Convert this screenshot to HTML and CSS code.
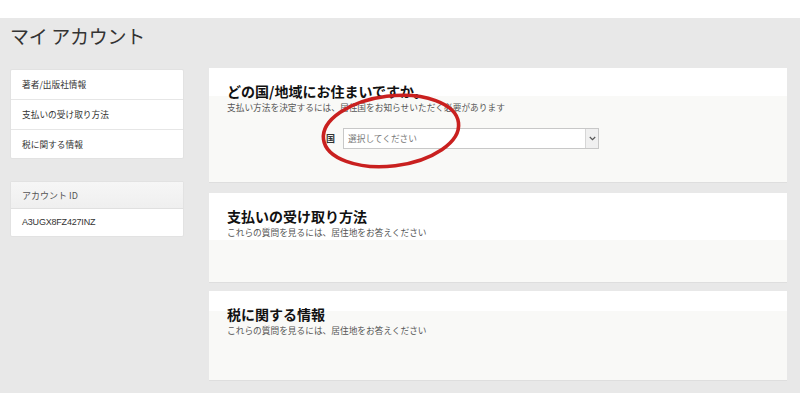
FILE: index.html
```html
<!DOCTYPE html>
<html lang="ja">
<head>
<meta charset="utf-8">
<title>マイ アカウント</title>
<link rel="stylesheet" href="styles.css">
</head>
<body>
<div class="topbar"></div>
<div class="page">
  <h1 class="page-title">マイ アカウント</h1>
  <div class="layout">
    <aside class="sidebar">
      <ul class="card nav">
        <li class="nav-item">著者/出版社情報</li>
        <li class="nav-item">支払いの受け取り方法</li>
        <li class="nav-item">税に関する情報</li>
      </ul>
      <div class="card account">
        <div class="account-head">アカウント ID</div>
        <div class="account-body">A3UGX8FZ427INZ</div>
      </div>
    </aside>
    <main class="main">
      <section class="panel panel-country">
        <h2 class="panel-title">どの国/地域にお住まいですか。</h2>
        <p class="panel-sub">支払い方法を決定するには、居住国をお知らせいただく必要があります</p>
        <div class="field">
          <label class="field-label">国</label>
          <div class="select">
            <span class="select-text">選択してください</span>
            <span class="select-arrow">
              <svg width="7" height="5" viewBox="0 0 7 5"><path d="M0.8 1 L3.5 3.6 L6.2 1" fill="none" stroke="#555" stroke-width="1.2"/></svg>
            </span>
          </div>
        </div>
        <svg class="annotation" width="170" height="100" viewBox="0 0 170 100">
          <ellipse cx="84" cy="50" rx="68" ry="35" transform="rotate(-7 84 50)" fill="none" stroke="#c9201f" stroke-width="3.6"/>
        </svg>
      </section>
      <section class="panel panel-pay">
        <h2 class="panel-title">支払いの受け取り方法</h2>
        <p class="panel-sub">これらの質問を見るには、居住地をお答えください</p>
      </section>
      <section class="panel panel-tax">
        <h2 class="panel-title">税に関する情報</h2>
        <p class="panel-sub">これらの質問を見るには、居住地をお答えください</p>
      </section>
    </main>
  </div>
</div>
</body>
</html>
```
FILE: styles.css
```css
* { box-sizing: border-box; }
html, body {
  margin: 0;
  padding: 0;
  background: #fff;
  font-family: "Noto Sans CJK JP", "Noto Sans", sans-serif;
  color: #333;
}
.topbar { height: 18px; background: #fff; }
.page {
  background: #e8e8e8;
  height: 375px;
  padding: 0 13px 0 10px;
}
.page-title {
  margin: 0;
  height: 50px;
  padding-top: 5px;
  font-size: 19px;
  line-height: 26px;
  font-weight: 400;
  color: #333;
  letter-spacing: -0.3px;
}
.layout {
  display: grid;
  grid-template-columns: 174px 578px;
  column-gap: 25px;
}
.sidebar {
  padding-top: 1px;
  display: flex;
  flex-direction: column;
  gap: 22px;
}
.card {
  background: #fff;
  border: 1px solid #e2e2e2;
  border-radius: 2px;
  margin: 0;
  padding: 0;
  list-style: none;
}
.nav-item {
  height: 30px;
  line-height: 29px;
  padding-left: 11px;
  font-size: 8.7px;
  color: #333;
  border-bottom: 1px solid #e6e6e6;
}
.nav-item:last-child { border-bottom: 0; height: 28px; }
.account-head {
  height: 27px;
  line-height: 27px;
  padding-left: 11px;
  font-size: 9px;
  color: #555;
  background: linear-gradient(#f6f6f6, #efefef);
  border-bottom: 1px solid #e0e0e0;
}
.account-body {
  height: 27px;
  line-height: 27px;
  padding-left: 11px;
  font-size: 9px;
  color: #333;
  font-family: "Liberation Sans", "Noto Sans", sans-serif;
  letter-spacing: -0.2px;
}
.main {
  display: flex;
  flex-direction: column;
}
.panel {
  position: relative;
  background: linear-gradient(#fff 0, #fff 28px, #f9f9f7 28px);
  border-bottom: 1px solid #dedede;
  padding: 13px 18px 0;
}
.panel-country { height: 115px; }
.panel-pay { height: 90px; margin-top: 10px; background: linear-gradient(#fff 0, #fff 47px, #f9f9f7 47px); }
.panel-tax { height: 90px; margin-top: 8px; background: linear-gradient(#fff 0, #fff 20px, #f9f9f7 20px); }
.panel-title {
  margin: 0;
  font-size: 14px;
  line-height: 20px;
  font-weight: 700;
  color: #111;
}
.panel-sub {
  margin: 0;
  font-size: 8.7px;
  line-height: 13px;
  color: #555;
}
.field {
  display: flex;
  align-items: center;
  margin-top: 14px;
  margin-left: 99px;
}
.field-label {
  font-size: 9px;
  font-weight: 700;
  color: #333;
  width: 17px;
}
.select {
  width: 256px;
  height: 21px;
  background: #fff;
  border: 1px solid #c8c8c8;
  display: flex;
  align-items: stretch;
}
.select-text {
  flex: 1;
  font-size: 8.7px;
  line-height: 19px;
  padding-left: 4px;
  color: #777;
}
.select-arrow {
  width: 13px;
  border-left: 1px solid #d6d6d6;
  background: #f0f0f0;
  display: flex;
  align-items: center;
  justify-content: center;
}
.annotation {
  position: absolute;
  left: 98px;
  top: 13px;
  pointer-events: none;
}
```
